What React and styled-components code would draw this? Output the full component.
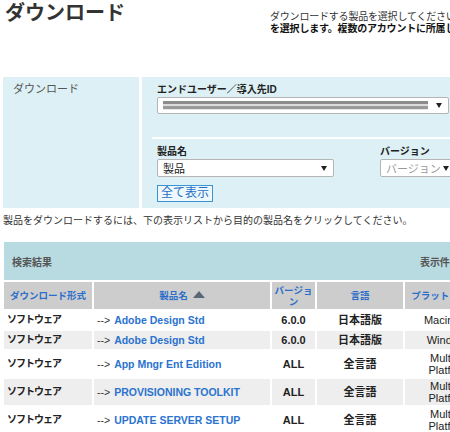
import React from "react"
import styled, { createGlobalStyle } from "styled-components"

const GlobalStyle = createGlobalStyle`
  body {
    margin: 0;
    overflow: hidden;
    background: #fff;
    font-family: "Liberation Sans", "Noto Sans CJK JP", sans-serif;
    color: #222;
  }
`

const Page = styled.div`
  width: 700px;
  padding-left: 3px;
`

const Header = styled.header`
  display: flex;
  height: 77px;
`

const Title = styled.h1`
  width: 265px;
  margin: 1px 0 0 2px;
  font-size: 20px;
  line-height: 24px;
  font-weight: bold;
  color: #333;
`

const Intro = styled.div`
  padding-top: 11px;
  font-size: 10px;
  line-height: 12px;
  letter-spacing: -0.2px;
  color: #333;
  white-space: nowrap;

  b {
    color: #111;
  }
`

const Panel = styled.section`
  display: grid;
  grid-template-columns: 136px 1fr;
  column-gap: 3px;
  width: 600px;
`

const SideCell = styled.div`
  background: #dcf0f5;
  padding: 5px 0 0 10px;
  font-size: 11px;
  line-height: 14px;
  color: #555;
`

const MainCell = styled.div`
  background: #dcf0f5;
  padding: 7px 0 6px 10px;
`

const Block = styled.div`
  padding: ${p => (p.$first ? "0 0 23px 5px" : "7px 0 0 5px")};
  border-bottom: ${p => (p.$first ? "2px solid #fff" : "none")};
`

const Row = styled.div`
  display: flex;
`

const Field = styled.div`
  width: ${p => p.$w || "auto"};
`

const Label = styled.div`
  font-size: 10px;
  line-height: 12px;
  font-weight: bold;
  color: #222;
  margin-bottom: 1px;
`

const Select = styled.div`
  display: flex;
  align-items: center;
  box-sizing: border-box;
  width: ${p => p.$w};
  height: ${p => p.$h || "17px"};
  padding: 0 6px 0 5px;
  background: #fff;
  border: 1px solid #b5b5b5;
  border-radius: 2px;
  font-size: 11px;
  color: ${p => (p.$disabled ? "#999" : "#222")};
`

const SelectText = styled.span`
  flex: 1;
  overflow: hidden;
  white-space: nowrap;
`

const Redacted = styled.span`
  flex: 1;
  height: 9px;
  margin-right: 8px;
  background: linear-gradient(
    #8c8c8c 0 3px,
    #dcdcdc 3px 5px,
    #9a9a9a 5px 8px,
    #e6e6e6 8px 9px
  );
`

const Arrow = styled.span`
  flex: none;
  width: 0;
  height: 0;
  border-left: 3px solid transparent;
  border-right: 3px solid transparent;
  border-top: 5px solid #222;
`

const ShowAll = styled.button`
  display: block;
  margin-top: 8px;
  padding: 0 3px;
  height: 17px;
  background: #eef8fb;
  border: 1px solid #3b93d6;
  font-family: inherit;
  font-size: 12px;
  line-height: 15px;
  color: #1f6fc8;
`

const Notice = styled.p`
  margin: 7px 0 0;
  font-size: 10px;
  line-height: 12px;
  color: #333;
`

const Table = styled.table`
  margin: 13px 0 0 -1px;
  width: 493px;
  border-collapse: separate;
  border-spacing: 2px;
  table-layout: fixed;
`

const Banner = styled.th`
  height: 38px;
  padding: 0 2px 0 8px;
  background: #b8dbe2;
  text-align: left;
`

const BannerInner = styled.div`
  display: flex;
  justify-content: space-between;
  font-size: 10px;
  font-weight: bold;
  color: #555;
`

const HeadCell = styled.th`
  height: 23px;
  padding: 2px 2px;
  background: #cdcdcd;
  font-size: 9.5px;
  line-height: 11px;
  font-weight: bold;
  color: #2b6fca;
  text-align: center;
`

const SortUp = styled.span`
  display: inline-block;
  margin-left: 5px;
  vertical-align: 1px;
  border-left: 6px solid transparent;
  border-right: 6px solid transparent;
  border-bottom: 7px solid #596775;
`

const Tr = styled.tr`
  height: 18px;
  background: ${p => (p.$alt ? "#eeeeee" : "#fff")};
`

const Td = styled.td`
  padding: 1px 3px;
  font-size: 11px;
  line-height: 12px;
  font-weight: ${p => (p.$bold ? "bold" : "normal")};
  text-align: ${p => (p.$center ? "center" : "left")};
  color: #222;
  white-space: pre-line;
`

const Kind = styled(Td)`
  font-size: 10px;
  letter-spacing: -1px;
`

const Product = styled(Td)`
  font-size: 10.5px;
`

const Pointer = styled.span`
  color: #333;
  margin-right: 4px;
`

const ProductLink = styled.a`
  color: #2a73cf;
  font-weight: bold;
  text-decoration: none;
`

const rows = [
  { name: "Adobe Design Std", ver: "6.0.0", lang: "日本語版", os: "Macintosh" },
  { name: "Adobe Design Std", ver: "6.0.0", lang: "日本語版", os: "Windows" },
  { name: "App Mngr Ent Edition", ver: "ALL", lang: "全言語", os: "Multiple\nPlatform" },
  { name: "PROVISIONING TOOLKIT", ver: "ALL", lang: "全言語", os: "Multiple\nPlatform" },
  { name: "UPDATE SERVER SETUP", ver: "ALL", lang: "全言語", os: "Multiple\nPlatform" },
]

export default function App() {
  return (
    <Page>
      <GlobalStyle />
      <Header>
        <Title>ダウンロード</Title>
        <Intro>
          ダウンロードする製品を選択してください。製品名をクリックしてください。
          <br />
          <b>を選択します。複数のアカウントに所属している場合は、</b>
        </Intro>
      </Header>

      <Panel>
        <SideCell>ダウンロード</SideCell>
        <MainCell>
          <Block $first>
            <Label>エンドユーザー／導入先ID</Label>
            <Select $w="292px">
              <Redacted />
              <Arrow />
            </Select>
          </Block>
          <Block>
            <Row>
              <Field $w="223px">
                <Label>製品名</Label>
                <Select $w="177px" $h="18px">
                  <SelectText>製品</SelectText>
                  <Arrow />
                </Select>
                <ShowAll type="button">全て表示</ShowAll>
              </Field>
              <Field>
                <Label>バージョン</Label>
                <Select $w="76px" $h="18px" $disabled>
                  <SelectText>バージョン</SelectText>
                  <Arrow />
                </Select>
              </Field>
            </Row>
          </Block>
        </MainCell>
      </Panel>

      <Notice>製品をダウンロードするには、下の表示リストから目的の製品名をクリックしてください。</Notice>

      <Table>
        <colgroup>
          <col style={{ width: 88 }} />
          <col style={{ width: 176 }} />
          <col style={{ width: 43 }} />
          <col style={{ width: 86 }} />
          <col style={{ width: 88 }} />
        </colgroup>
        <thead>
          <tr>
            <Banner colSpan={5}>
              <BannerInner>
                <span>検索結果</span>
                <span>表示件数：10件</span>
              </BannerInner>
            </Banner>
          </tr>
          <tr>
            <HeadCell>ダウンロード形式</HeadCell>
            <HeadCell>
              製品名<SortUp />
            </HeadCell>
            <HeadCell>バージョン</HeadCell>
            <HeadCell>言語</HeadCell>
            <HeadCell>プラットフォーム</HeadCell>
          </tr>
        </thead>
        <tbody>
          {rows.map((r, i) => (
            <Tr key={i} $alt={i % 2 === 1}>
              <Kind $bold>ソフトウェア</Kind>
              <Product>
                <Pointer>--&gt;</Pointer>
                <ProductLink href="#">{r.name}</ProductLink>
              </Product>
              <Td $bold $center>{r.ver}</Td>
              <Td $bold $center>{r.lang}</Td>
              <Td $center>{r.os}</Td>
            </Tr>
          ))}
        </tbody>
      </Table>
    </Page>
  )
}
